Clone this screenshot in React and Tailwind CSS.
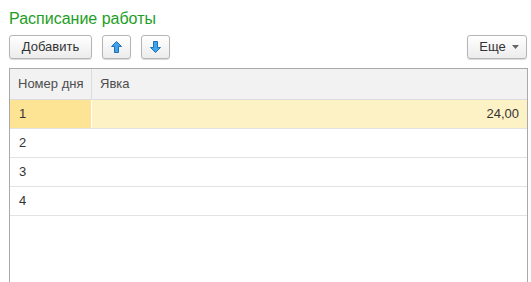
export default function App() {
  const Btn = ({ children, className = "" }) => (
    <button
      className={
        "h-[24px] rounded-[3px] border border-[#b5b5b5] bg-gradient-to-b from-white to-[#ececec] shadow-[0_1px_1px_rgba(0,0,0,0.15)] text-[13px] text-[#333] flex items-center justify-center " +
        className
      }
    >
      {children}
    </button>
  );
  const Up = () => (
    <svg width="11" height="12" viewBox="0 0 11 12">
      <path d="M5.5 0.5 L10.5 5.5 L7.5 5.5 L7.5 11.5 L3.5 11.5 L3.5 5.5 L0.5 5.5 Z" fill="#3fa5ea" stroke="#1f6fb8" strokeWidth="1" strokeLinejoin="round" />
    </svg>
  );
  const Down = () => (
    <svg width="11" height="12" viewBox="0 0 11 12">
      <path d="M5.5 11.5 L10.5 6.5 L7.5 6.5 L7.5 0.5 L3.5 0.5 L3.5 6.5 L0.5 6.5 Z" fill="#3fa5ea" stroke="#1f6fb8" strokeWidth="1" strokeLinejoin="round" />
    </svg>
  );
  const rows = ["1", "2", "3", "4"];
  return (
    <div className="w-[531px] h-[282px] overflow-hidden bg-white font-['Liberation_Sans',Arial,sans-serif] text-[#333]">
      <div className="pl-[9px] pt-[9px] text-[16px] leading-[20px] text-[#1d9e25]">Расписание работы</div>
      <div className="flex items-center pl-[9px] pr-[4px] mt-[6px]">
        <Btn className="w-[83px]">Добавить</Btn>
        <Btn className="w-[29px] ml-[10px]"><Up /></Btn>
        <Btn className="w-[29px] ml-[10px]"><Down /></Btn>
        <Btn className="w-[60px] ml-auto gap-[6px] pl-[4px]">
          <span>Еще</span>
          <svg width="7" height="4" viewBox="0 0 7 4"><path d="M0 0 H7 L3.5 4 Z" fill="#666" /></svg>
        </Btn>
      </div>
      <div className="ml-[9px] mr-[3px] mt-[9px] h-[230px] border border-[#a9a9a9] border-b-0">
        <div className="flex h-[31px] bg-[#f2f2f2] border-b border-[#dcdcdc] text-[13px] text-[#4d4d4d]">
          <div className="w-[82px] border-r border-[#dcdcdc] flex items-center pl-[8px]">Номер дня</div>
          <div className="flex-1 flex items-center pl-[8px]">Явка</div>
        </div>
        {rows.map((r, i) => (
          <div key={r} className={"flex h-[29px] border-b border-[#e3e3e3] text-[13px] " + (i === 0 ? "bg-[#fdf1c6]" : "")}>
            <div className={"w-[82px] flex items-center pl-[9px] " + (i === 0 ? "bg-[#fde394] border-r border-white" : "")}>{r}</div>
            <div className="flex-1 flex items-center justify-end pr-[8px]">{i === 0 ? "24,00" : ""}</div>
          </div>
        ))}
      </div>
    </div>
  );
}
